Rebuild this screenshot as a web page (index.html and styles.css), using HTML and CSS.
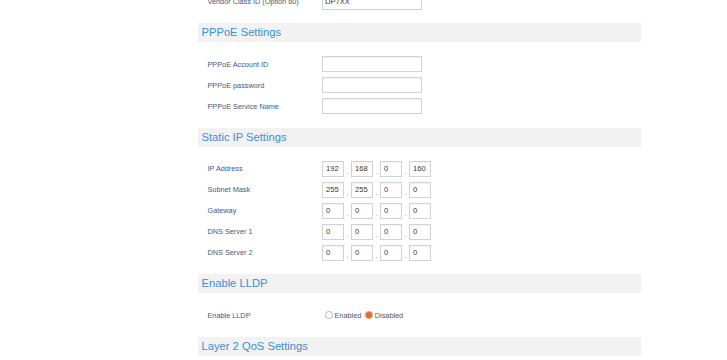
FILE: index.html
```html
<!DOCTYPE html>
<html lang="en">
<head>
    <meta charset="UTF-8">
    <meta name="viewport" content="width=device-width, initial-scale=1.0">
    <title>Network Settings</title>
    <link rel="stylesheet" href="styles.css">
</head>
<body>
<div class="page">
    <div class="section">
        <div class="section-body first">
            <div class="row">
                <label class="row-label" for="vendor_class">Vendor Class ID (Option 60)</label>
                <input class="text" type="text" id="vendor_class" value="DP7XX">
            </div>
        </div>
    </div>

    <div class="section">
        <h2 class="section-title">PPPoE Settings</h2>
        <div class="section-body">
            <div class="row">
                <label class="row-label" for="pppoe_id">PPPoE Account ID</label>
                <input class="text" type="text" id="pppoe_id">
            </div>
            <div class="row">
                <label class="row-label" for="pppoe_pass">PPPoE password</label>
                <input class="text" type="password" id="pppoe_pass">
            </div>
            <div class="row">
                <label class="row-label" for="pppoe_service">PPPoE Service Name</label>
                <input class="text" type="text" id="pppoe_service">
            </div>
        </div>
    </div>

    <div class="section">
        <h2 class="section-title">Static IP Settings</h2>
        <div class="section-body">
            <div class="row">
                <span class="row-label">IP Address</span>
                <input class="ip" type="text" value="192"><span class="dot">.</span><input class="ip" type="text" value="168"><span class="dot">.</span><input class="ip" type="text" value="0"><span class="dot">.</span><input class="ip" type="text" value="160">
            </div>
            <div class="row">
                <span class="row-label">Subnet Mask</span>
                <input class="ip" type="text" value="255"><span class="dot">.</span><input class="ip" type="text" value="255"><span class="dot">.</span><input class="ip" type="text" value="0"><span class="dot">.</span><input class="ip" type="text" value="0">
            </div>
            <div class="row">
                <span class="row-label">Gateway</span>
                <input class="ip" type="text" value="0"><span class="dot">.</span><input class="ip" type="text" value="0"><span class="dot">.</span><input class="ip" type="text" value="0"><span class="dot">.</span><input class="ip" type="text" value="0">
            </div>
            <div class="row">
                <span class="row-label">DNS Server 1</span>
                <input class="ip" type="text" value="0"><span class="dot">.</span><input class="ip" type="text" value="0"><span class="dot">.</span><input class="ip" type="text" value="0"><span class="dot">.</span><input class="ip" type="text" value="0">
            </div>
            <div class="row">
                <span class="row-label">DNS Server 2</span>
                <input class="ip" type="text" value="0"><span class="dot">.</span><input class="ip" type="text" value="0"><span class="dot">.</span><input class="ip" type="text" value="0"><span class="dot">.</span><input class="ip" type="text" value="0">
            </div>
        </div>
    </div>

    <div class="section">
        <h2 class="section-title">Enable LLDP</h2>
        <div class="section-body">
            <div class="row">
                <span class="row-label">Enable LLDP</span>
                <input class="radio" type="radio" name="lldp" id="lldp_on">
                <label class="radio-label" for="lldp_on">Enabled</label>
                <input class="radio" type="radio" name="lldp" id="lldp_off" checked>
                <label class="radio-label" for="lldp_off">Disabled</label>
            </div>
        </div>
    </div>

    <div class="section">
        <h2 class="section-title">Layer 2 QoS Settings</h2>
        <div class="section-body"></div>
    </div>
</div>
</body>
</html>
```

FILE: styles.css
```css
body {
    margin: 0;
    padding: 0;
    background-color: #fff;
    font-family: "Liberation Sans", Arial, sans-serif;
    overflow: hidden;
}
.page {
    width: 443px;
    margin: -9px 0 0 198px;
}
.section-title {
    margin: 0;
    height: 19px;
    line-height: 19px;
    padding-left: 3.5px;
    background-color: #f2f2f2;
    color: #3a8fd5;
    font-size: 11.2px;
    font-weight: normal;
}
.section-body {
    padding: 11.5px 0 11px;
}
.section-body.first {
    padding-top: 0;
}
.row {
    display: flex;
    align-items: center;
    height: 21px;
}
.row-label {
    width: 114.5px;
    padding-left: 9.5px;
    font-size: 7.3px;
    color: #46597d;
}
input.text, input.ip {
    box-sizing: border-box;
    height: 16px;
    margin: 0;
    padding: 0 2px;
    border: 1px solid #d2d2d2;
    border-radius: 0;
    box-shadow: inset 0 1px 1px rgba(0, 0, 0, 0.05);
    background: #fff;
    font-family: "Liberation Sans", Arial, sans-serif;
    font-size: 7.6px;
    color: #333;
}
input.text {
    width: 100px;
}
input.ip {
    width: 22px;
    padding-left: 3px;
}
.dot {
    width: 7px;
    text-align: center;
    font-size: 7.3px;
    color: #888;
    align-self: flex-end;
    padding-bottom: 3px;
}
.radio {
    appearance: none;
    -webkit-appearance: none;
    box-sizing: border-box;
    width: 7.5px;
    height: 7.5px;
    margin: 0 2px 0 3px;
    border: 1px solid #b8b8b8;
    border-radius: 50%;
    background: #fff;
}
.radio:checked {
    border-color: #eda07c;
    background: #e5682f;
}
.radio-label {
    font-size: 7.3px;
    color: #555;
    margin-top: 1px;
    margin-right: 1px;
}
```
